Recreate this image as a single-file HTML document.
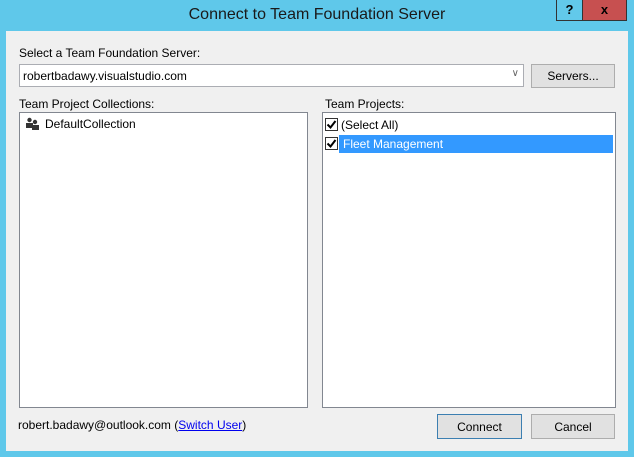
<!DOCTYPE html>
<html><head><style>
*{margin:0;padding:0;box-sizing:border-box}
body{width:634px;height:457px;background:#5fc8ea;font-family:"Liberation Sans",sans-serif;font-size:12px;color:#000;position:relative;overflow:hidden}
.a{position:absolute}
.title{left:0;top:6px;width:634px;text-align:center;font-size:16px;color:#1a1a1a}
.client{left:6px;top:31px;width:622px;height:420px;background:#f0f0f0}
.box{background:#fff;border:1px solid #828790}
.btn{background:#e1e1e1;border:1px solid #adadad;text-align:center;line-height:22px}
.cb{width:13px;height:13px;border:1px solid #333;background:#fff}
</style></head><body>
<div class="a title">Connect to Team Foundation Server</div>
<div class="a" style="left:556px;top:0;width:27px;height:21px;background:#62c9ea;border:1px solid #333;border-top:none;text-align:center;font-weight:bold;font-size:13px;line-height:20px">?</div>
<div class="a" style="left:583px;top:0;width:44px;height:21px;background:#c75050;border:1px solid #333;border-top:none;border-left:none;text-align:center;font-weight:bold;font-size:13px;line-height:20px">x</div>
<div class="a client"></div>
<div class="a" style="left:19px;top:46px">Select a Team Foundation Server:</div>
<div class="a box" style="left:19px;top:64px;width:505px;height:23px;border-color:#abadb3;padding:4px 3px">robertbadawy.visualstudio.com<span class="a" style="right:4px;top:3px;color:#666;font-size:10px">&#8744;</span></div>
<div class="a btn" style="left:531px;top:64px;width:84px;height:24px">Servers...</div>
<div class="a" style="left:19px;top:97px">Team Project Collections:</div>
<div class="a" style="left:325px;top:97px">Team Projects:</div>
<div class="a box" style="left:19px;top:112px;width:289px;height:296px"></div>
<div class="a box" style="left:322px;top:112px;width:294px;height:296px"></div>
<svg class="a" style="left:26px;top:117px" width="13" height="13"><circle cx="3.5" cy="3" r="2.2" fill="#333"/><rect x="0" y="6" width="7" height="5" fill="#333"/><circle cx="9" cy="5" r="2.2" fill="#333"/><rect x="6" y="8" width="7" height="5" fill="#333"/></svg>
<div class="a" style="left:45px;top:117px">DefaultCollection</div>
<div class="a cb" style="left:325px;top:118px"></div>
<svg class="a" style="left:326px;top:119px" width="11" height="11"><path d="M1.5 5.5 L4.5 8.5 L9.5 2" stroke="#000" stroke-width="2" fill="none"/></svg>
<div class="a" style="left:341px;top:118px">(Select All)</div>
<div class="a" style="left:339px;top:135px;width:274px;height:18px;background:#3399ff"></div>
<div class="a cb" style="left:325px;top:137px"></div>
<svg class="a" style="left:326px;top:138px" width="11" height="11"><path d="M1.5 5.5 L4.5 8.5 L9.5 2" stroke="#000" stroke-width="2" fill="none"/></svg>
<div class="a" style="left:343px;top:137px;color:#fff">Fleet Management</div>
<div class="a" style="left:18px;top:418px">robert.badawy@outlook.com (<span style="color:#0000ee;text-decoration:underline">Switch User</span>)</div>
<div class="a btn" style="left:437px;top:414px;width:85px;height:25px;border-color:#3c7fb1;line-height:24px">Connect</div>
<div class="a btn" style="left:531px;top:414px;width:84px;height:25px;line-height:24px">Cancel</div>
</body></html>
